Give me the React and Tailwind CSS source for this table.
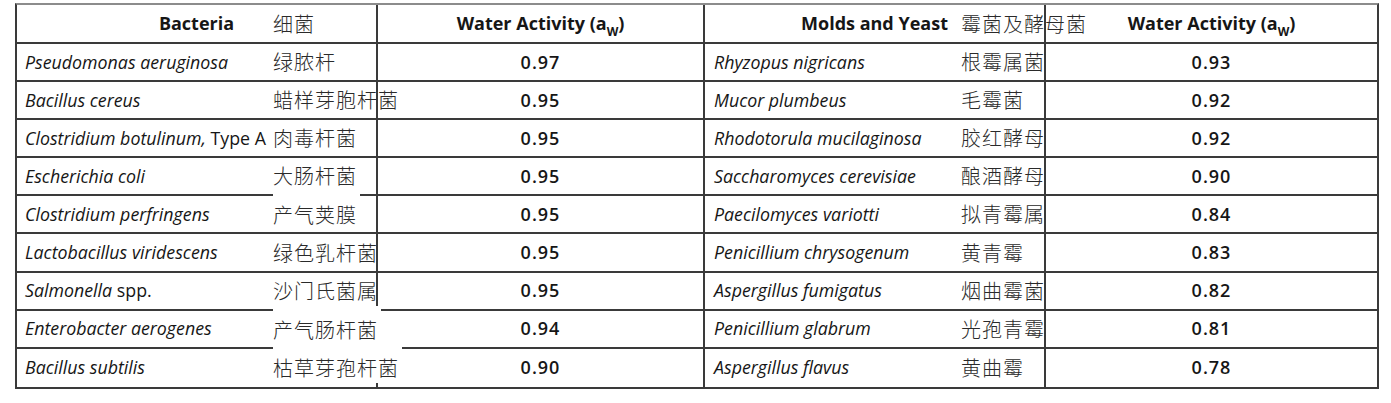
import React from "react";

const bacteria = [
  { name: <i>Pseudomonas aeruginosa</i>, zh: "绿脓杆", aw: "0.97" },
  { name: <i>Bacillus cereus</i>, zh: "蜡样芽胞杆菌", aw: "0.95" },
  {
    name: (
      <>
        <i>Clostridium botulinum,</i> Type A
      </>
    ),
    zh: "肉毒杆菌",
    aw: "0.95",
  },
  { name: <i>Escherichia coli</i>, zh: "大肠杆菌", aw: "0.95" },
  { name: <i>Clostridium perfringens</i>, zh: "产气荚膜", aw: "0.95", mask: true },
  { name: <i>Lactobacillus viridescens</i>, zh: "绿色乳杆菌", aw: "0.95" },
  {
    name: (
      <>
        <i>Salmonella</i> spp.
      </>
    ),
    zh: "沙门氏菌属",
    aw: "0.95",
  },
  { name: <i>Enterobacter aerogenes</i>, zh: "产气肠杆菌", aw: "0.94", mask: true },
  { name: <i>Bacillus subtilis</i>, zh: "枯草芽孢杆菌", aw: "0.90", mask: true },
];

const molds = [
  { name: "Rhyzopus nigricans", zh: "根霉属菌", aw: "0.93" },
  { name: "Mucor plumbeus", zh: "毛霉菌", aw: "0.92" },
  { name: "Rhodotorula mucilaginosa", zh: "胶红酵母", aw: "0.92" },
  { name: "Saccharomyces cerevisiae", zh: "酿酒酵母", aw: "0.90" },
  { name: "Paecilomyces variotti", zh: "拟青霉属", aw: "0.84" },
  { name: "Penicillium chrysogenum", zh: "黄青霉", aw: "0.83" },
  { name: "Aspergillus fumigatus", zh: "烟曲霉菌", aw: "0.82" },
  { name: "Penicillium glabrum", zh: "光孢青霉", aw: "0.81" },
  { name: "Aspergillus flavus", zh: "黄曲霉", aw: "0.78" },
];

const latin = { fontFamily: '"Open Sans", "Liberation Sans", sans-serif' };
const cjk = { fontFamily: '"Noto Sans CJK SC", "Noto Sans", sans-serif' };

const ZhLabel = ({ text, left, mask }) => {
  if (mask) {
    return (
      <span
        style={cjk}
        className={`absolute top-[-5px] h-[39px] pt-[9px] pr-[3px] flex items-center bg-white text-[20px] tracking-[1px] font-light text-[#2a2a2a] leading-none ${left}`}
      >
        {text}
      </span>
    );
  }
  return (
    <span
      style={cjk}
      className={`absolute inset-y-0 flex items-center text-[20px] tracking-[1px] font-light text-[#2a2a2a] leading-none ${left}`}
    >
      {text}
    </span>
  );
};

const WaterActivity = () => (
  <span>
    Water Activity (a<sub className="text-[12px] align-[-3px]">W</sub>)
  </span>
);

export default function App() {
  return (
    <div className="w-full h-[403px] bg-white pt-[3px] pl-[15px] text-[#161616]" style={latin}>
      <div className="w-[1364px] border-2 border-[#3a3a3a] border-t-[#8c8c8c]">
        {/* header */}
        <div className="relative grid grid-cols-[361px_327px_341px_1fr] h-[39px] border-b-2 border-[#3a3a3a] text-[18px] font-bold">
          <div className="border-r-2 border-[#3a3a3a] flex items-center justify-center">Bacteria</div>
          <div className="border-r-2 border-[#3a3a3a] flex items-center justify-center">
            <WaterActivity />
          </div>
          <div className="border-r-2 border-[#3a3a3a] flex items-center justify-center">Molds and Yeast</div>
          <div className="flex items-center justify-center">
            <WaterActivity />
          </div>
          <ZhLabel text="细菌" left="left-[256px]" />
          <ZhLabel text="霉菌及酵母菌" left="left-[944px]" />
        </div>

        {bacteria.map((b, i) => (
          <div
            key={i}
            className={`relative grid grid-cols-[361px_327px_341px_1fr] h-[38.1px] text-[17.8px] ${
              i < bacteria.length - 1 ? "border-b-2 border-[#3a3a3a]" : ""
            }`}
          >
            <div className="border-r-2 border-[#3a3a3a] flex items-center pl-[8px] whitespace-nowrap">
              <span>{b.name}</span>
            </div>
            <div className="border-r-2 border-[#3a3a3a] flex items-center justify-center text-[18px] font-semibold tracking-[1px]">
              {b.aw}
            </div>
            <div className="border-r-2 border-[#3a3a3a] flex items-center pl-[9px] italic whitespace-nowrap">
              {molds[i].name}
            </div>
            <div className="flex items-center justify-center text-[18px] font-semibold tracking-[1px]">
              {molds[i].aw}
            </div>
            <ZhLabel text={b.zh} left="left-[256px]" mask={b.mask} />
            <ZhLabel text={molds[i].zh} left="left-[944px]" />
          </div>
        ))}
      </div>
    </div>
  );
}
